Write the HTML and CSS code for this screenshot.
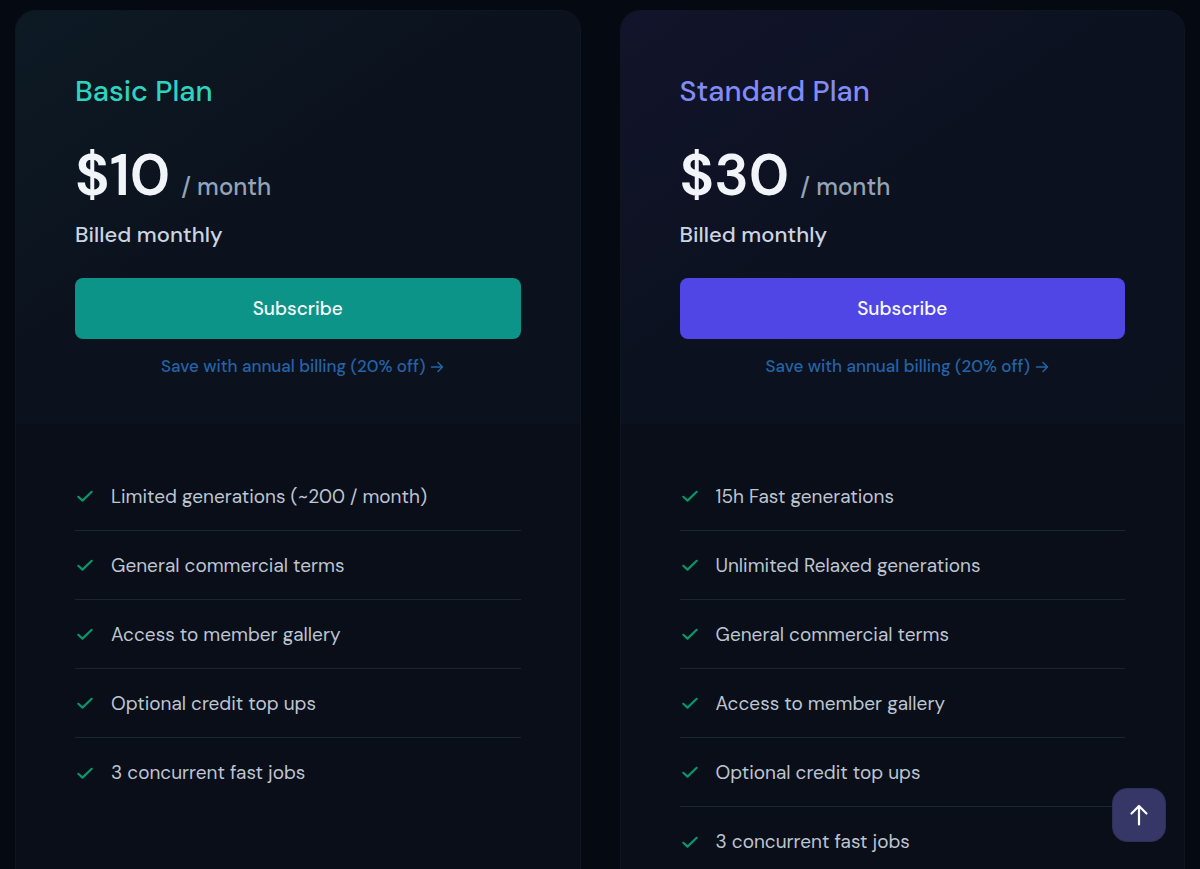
FILE: index.html
```html
<!DOCTYPE html>
<html lang="en">
<head>
  <meta charset="UTF-8">
  <meta name="viewport" content="width=device-width, initial-scale=1.0">
  <title>Plans</title>
  <link rel="stylesheet" href="styles.css">
</head>
<body>
  <!-- check and arrow icons shared by both cards -->
  <svg class="sprite" width="0" height="0" aria-hidden="true">
    <symbol id="check" viewBox="0 0 20 20">
      <path d="M3.3 10.8 L7.5 14.6 L16.7 5.8" fill="none" stroke="currentColor" stroke-width="2.2" stroke-linecap="round" stroke-linejoin="round"/>
    </symbol>
    <symbol id="arrow" viewBox="0 0 14 14">
      <path d="M1.5 7 H12.3 M8 2.5 L12.5 7 L8 11.5" fill="none" stroke="currentColor" stroke-width="1.5" stroke-linecap="round" stroke-linejoin="round"/>
    </symbol>
  </svg>

  <main class="pricing">
    <section class="card basic">
      <div class="card-header">
        <h2 class="plan-name">Basic Plan</h2>
        <p class="price"><span class="amount">$10</span><span class="period">/ month</span></p>
        <p class="billing">Billed monthly</p>
        <button class="btn" type="button">Subscribe</button>
        <a class="save-link" href="#annual">Save with annual billing (20% off) <svg class="arrow"><use href="#arrow"/></svg></a>
      </div>
      <ul class="features">
        <li><svg class="check"><use href="#check"/></svg>Limited generations (~200 / month)</li>
        <li><svg class="check"><use href="#check"/></svg>General commercial terms</li>
        <li><svg class="check"><use href="#check"/></svg>Access to member gallery</li>
        <li><svg class="check"><use href="#check"/></svg>Optional credit top ups</li>
        <li><svg class="check"><use href="#check"/></svg>3 concurrent fast jobs</li>
      </ul>
    </section>

    <section class="card standard">
      <div class="card-header">
        <h2 class="plan-name">Standard Plan</h2>
        <p class="price"><span class="amount">$30</span><span class="period">/ month</span></p>
        <p class="billing">Billed monthly</p>
        <button class="btn" type="button">Subscribe</button>
        <a class="save-link" href="#annual">Save with annual billing (20% off) <svg class="arrow"><use href="#arrow"/></svg></a>
      </div>
      <ul class="features">
        <li><svg class="check"><use href="#check"/></svg>15h Fast generations</li>
        <li><svg class="check"><use href="#check"/></svg>Unlimited Relaxed generations</li>
        <li><svg class="check"><use href="#check"/></svg>General commercial terms</li>
        <li><svg class="check"><use href="#check"/></svg>Access to member gallery</li>
        <li><svg class="check"><use href="#check"/></svg>Optional credit top ups</li>
        <li><svg class="check"><use href="#check"/></svg>3 concurrent fast jobs</li>
      </ul>
    </section>
  </main>

  <button class="to-top" id="toTop" type="button" aria-label="Back to top">
    <svg width="22" height="24" viewBox="0 0 22 24" fill="none" stroke="currentColor" stroke-width="2.2" stroke-linecap="round" stroke-linejoin="round">
      <path d="M11 21.5 V3 M3.5 10.5 L11 3 L18.5 10.5"/>
    </svg>
  </button>

  <script>
    document.getElementById('toTop').addEventListener('click', () => {
      window.scrollTo({ top: 0, behavior: 'smooth' });
    });
  </script>
</body>
</html>
```
FILE: styles.css
```css
* {
  box-sizing: border-box;
}

html {
  scrollbar-width: none;
}

body {
  margin: 0;
  background-color: #050912;
  color: #cbd5e1;
  font-family: "DM Sans", Inter, sans-serif;
  font-optical-sizing: none;
}

.sprite {
  position: absolute;
}

.pricing {
  display: grid;
  grid-template-columns: 1fr 1fr;
  gap: 39px;
  padding: 10px 15px;
}

.card {
  background-color: #0a0e18;
  border: 1px solid #10161f;
  border-radius: 20px;
  overflow: hidden;
}

.card-header {
  display: flex;
  flex-direction: column;
  padding: 60px 59px 45px;
}

.basic .card-header {
  background: linear-gradient(145deg, #0d1a24 0%, #0b111d 50%, #0b111d 100%);
}

.standard .card-header {
  background: linear-gradient(145deg, #12142b 0%, #0b111e 55%, #0b111d 100%);
}

.plan-name {
  margin: 0;
  font-size: 29px;
  font-weight: 500;
  line-height: 40px;
}

.basic .plan-name {
  color: #2dd4bf;
}

.standard .plan-name {
  color: #818cf8;
}

.price {
  display: flex;
  align-items: baseline;
  gap: 11px;
  margin: 32px 0 0;
  line-height: 64px;
}

.amount {
  color: #f1f5f9;
  font-size: 58px;
  font-weight: 600;
}

.period {
  color: #94a3b8;
  font-size: 24px;
  font-weight: 500;
}

.billing {
  margin: 0;
  font-size: 22px;
  font-weight: 500;
  line-height: 32px;
}

.btn {
  height: 61px;
  margin-top: 27px;
  border: none;
  border-radius: 8px;
  color: #f8fafc;
  font-family: inherit;
  font-size: 19px;
  font-weight: 500;
  cursor: pointer;
}

.basic .btn {
  background-color: #0d9488;
}

.standard .btn {
  background-color: #4f46e5;
}

.save-link {
  display: flex;
  align-items: center;
  justify-content: center;
  gap: 5px;
  margin-top: 15px;
  padding-left: 10px;
  color: #2563a6;
  font-size: 17px;
  font-weight: 500;
  line-height: 25px;
  text-decoration: none;
}

.arrow {
  width: 14px;
  height: 14px;
}

.features {
  margin: 0;
  padding: 38px 59px 60px;
  list-style: none;
}

.features li {
  display: flex;
  align-items: center;
  gap: 16px;
  height: 69px;
  border-bottom: 1px solid #1a2534;
  color: #bcc5d1;
  font-size: 19px;
}

.features li:last-child {
  border-bottom: none;
}

.check {
  width: 20px;
  height: 20px;
  color: #059669;
}

.to-top {
  position: fixed;
  right: 34px;
  bottom: 27px;
  display: flex;
  align-items: center;
  justify-content: center;
  width: 54px;
  height: 54px;
  padding: 0;
  border: 1px solid #2e3058;
  border-radius: 15px;
  background-color: #363766;
  color: #ffffff;
  cursor: pointer;
}
```
